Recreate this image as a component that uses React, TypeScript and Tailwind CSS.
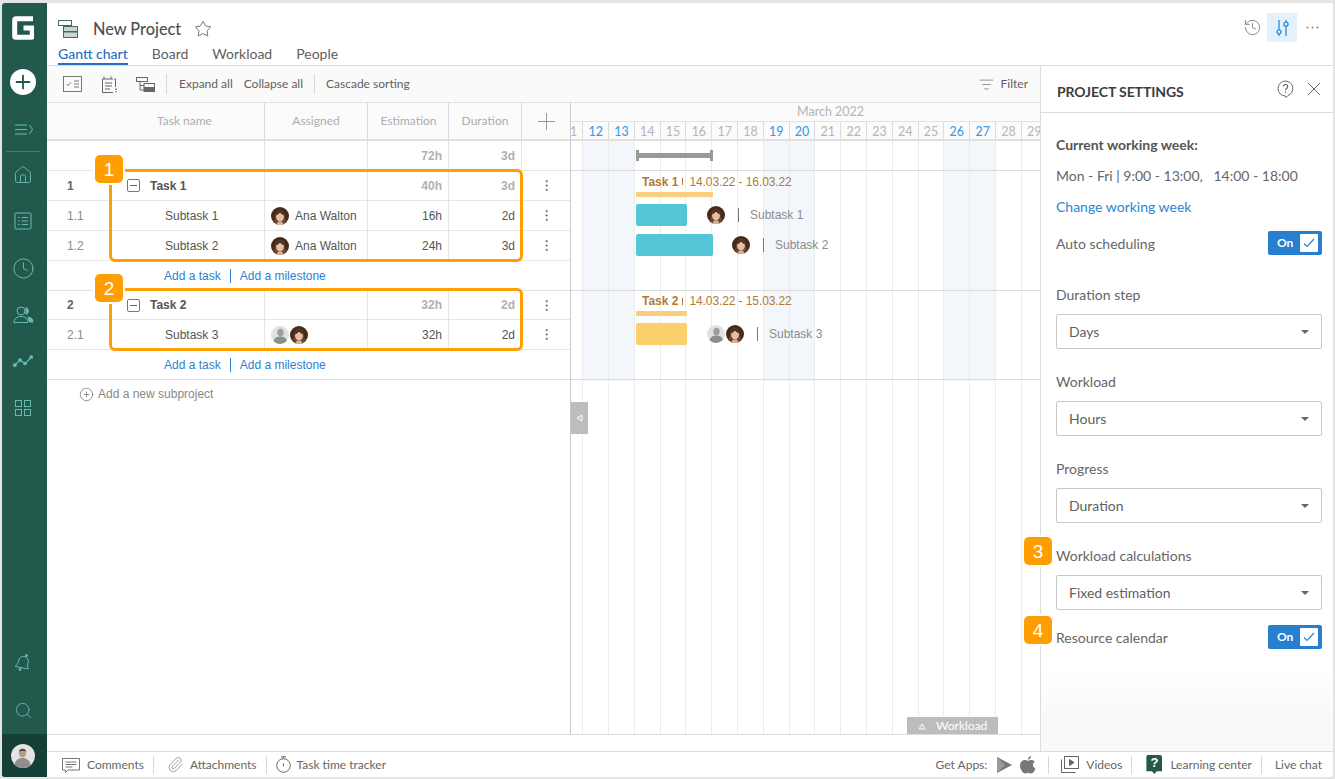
import { ReactNode } from "react";
import {
  CirclePlus,
  Clock,
  EllipsisVertical,
  History,
  House,
  ListFilter,
  Paperclip,
  Plus,
  Search,
  Star,
} from "lucide-react";

const arial = "font-['Liberation_Sans',Arial,sans-serif]";
const days = [11, 12, 13, 14, 15, 16, 17, 18, 19, 20, 21, 22, 23, 24, 25, 26, 27, 28, 29];
const weekend = [12, 13, 19, 20, 26, 27];

function Avatar({ gray, size = 18 }: { gray?: boolean; size?: number }) {
  if (gray) {
    return (
      <svg width={size} height={size} viewBox="0 0 18 18" className="shrink-0">
        <defs>
          <clipPath id="gray-clip">
            <circle cx="9" cy="9" r="9" />
          </clipPath>
        </defs>
        <g clipPath="url(#gray-clip)">
          <rect width="18" height="18" fill="#dfe2e2" />
          <ellipse cx="9.500" cy="6.500" rx="3.200" ry="3.800" fill="#a39c92" />
          <path d="M2 18c0-5 3-7.500 7.500-7.500s7 2.500 7 7.500z" fill="#8b908e" />
        </g>
      </svg>
    );
  }
  return (
    <svg width={size} height={size} viewBox="0 0 18 18" className="shrink-0">
      <circle cx="9" cy="9" r="9" fill="#45291b" />
      <path d="M2.500 14c1-1 1.500-3 1.800-5C4.800 5 6.500 3.200 9 3.200S13.200 5 13.700 9c.3 2 .8 4 1.800 5-1 2-3.500 3.500-6.500 3.500S3.500 16 2.500 14z" fill="#6b4632" />
      <ellipse cx="9" cy="9.500" rx="3.900" ry="5" fill="#e6bfa3" />
      <path d="M5 8.500C5.500 5.500 7 4.200 9 4c2 .2 3.500 1.500 4 4.500-1.500-.8-3-1.800-4-3-1 1.200-2.500 2.200-4 3z" fill="#3f2519" />
      <path d="M7 14.500h4l2 3.500H5z" fill="#d9ae92" />
    </svg>
  );
}

function UserAvatar() {
  return (
    <svg width="24" height="24" viewBox="0 0 24 24">
      <defs>
        <clipPath id="user-clip">
          <circle cx="12" cy="12" r="12" />
        </clipPath>
      </defs>
      <g clipPath="url(#user-clip)">
        <rect width="24" height="24" fill="#e4e4e2" />
        <ellipse cx="11.500" cy="9" rx="3.600" ry="4.400" fill="#b89c88" />
        <path d="M7.800 7.500C8.500 4 15 4 15.300 7.500 13 6.500 10 6.500 7.800 7.500z" fill="#4b4038" />
        <path d="M3 24c0-7 4-10 8.500-10S20 17 20 24z" fill="#8f908c" />
      </g>
    </svg>
  );
}

function SideIcon({ children, className }: { children: ReactNode; className?: string }) {
  return <div className={`flex h-[20px] w-[42px] items-center justify-center text-[#66bdae] ${className ?? ""}`}>{children}</div>;
}

function Sidebar() {
  return (
    <div className="flex w-[45px] shrink-0 flex-col bg-[#23594c]">
      <div className="ml-[10px] mt-[13px] h-[24px]">
        <svg width="22" height="24" viewBox="0 0 22 24" className="block">
          <path d="M21 2.700H3.700a1 1 0 0 0-1 1v16.600a1 1 0 0 0 1 1h15.600a1 1 0 0 0 1-1V12H11.500" fill="none" stroke="#fff" strokeWidth="5" />
        </svg>
      </div>
      <div className="ml-[8px] mt-[29px] flex h-[26px] w-[26px] items-center justify-center rounded-full bg-white">
        <Plus size={22} strokeWidth={2} className="text-[#23594c]" />
      </div>
      <SideIcon className="mt-[24px]">
        <svg width="19" height="11" viewBox="0 0 19 11" fill="none" stroke="currentColor" strokeWidth="1">
          <path d="M1 1h12M1 5.500h12M1 10h12M15.500 1 18.500 5.500 15.500 10" />
        </svg>
      </SideIcon>
      <div className="ml-[4px] mt-[12px] h-px w-[34px] bg-[#3f7e70]" />
      <SideIcon className="mt-[13px]">
        <House size={20} strokeWidth={1.100} />
      </SideIcon>
      <SideIcon className="mt-[26px]">
        <svg width="18" height="18" viewBox="0 0 18 18" fill="none" stroke="currentColor" strokeWidth="1">
          <rect x="1" y="1" width="16" height="16" rx="1" />
          <path d="M4 5.500h1.500M7.500 5.500H14M4 9h1.500M7.500 9H14M4 12.500h1.500M7.500 12.500H14" />
        </svg>
      </SideIcon>
      <SideIcon className="mt-[27px]">
        <Clock size={23} strokeWidth={1} />
      </SideIcon>
      <SideIcon className="mt-[27px]">
        <svg width="21" height="18" viewBox="0 0 21 18" fill="none" stroke="currentColor" strokeWidth="1">
          <circle cx="8" cy="5" r="4" />
          <path d="M1 16.500c0-4 3-6 7-6s7 2 7 6z" />
          <path d="M13 1.500a3.800 3.800 0 0 1 0 7z" fill="currentColor" />
          <path d="M15 11c3 .4 5 2 5 5h-3.500z" fill="currentColor" />
        </svg>
      </SideIcon>
      <SideIcon className="mt-[26px]">
        <svg width="20" height="12" viewBox="0 0 20 12" fill="none" stroke="currentColor" strokeWidth="1.100">
          <path d="M1.500 10.500 7 5l5 3.500 6.500-6.500" />
          <circle cx="1.800" cy="10.200" r="1.300" fill="currentColor" />
          <circle cx="7" cy="5" r="1.300" fill="currentColor" />
          <circle cx="12" cy="8.500" r="1.300" fill="currentColor" />
          <circle cx="18.200" cy="2.200" r="1.300" fill="currentColor" />
        </svg>
      </SideIcon>
      <SideIcon className="mt-[27px]">
        <svg width="16" height="16" viewBox="0 0 16 16" fill="none" stroke="currentColor" strokeWidth="1">
          <rect x=".5" y=".5" width="6" height="6" />
          <rect x="9.500" y=".5" width="6" height="6" />
          <rect x=".5" y="9.500" width="6" height="6" />
          <rect x="9.500" y="9.500" width="6" height="6" />
        </svg>
      </SideIcon>
      <SideIcon className="mt-auto">
        <svg width="18" height="18" viewBox="0 0 18 18" fill="none" stroke="currentColor" strokeWidth="1">
          <path d="M1 12.500c2-1 3-3 3.500-5.500C5.200 3.500 8.500 1.500 11 2.500c2.800 1 4 3.800 3 7-.7 2-.5 4 .5 5.500z" />
          <circle cx="12.500" cy="1.500" r="1" fill="currentColor" />
          <circle cx="6" cy="15.500" r="1" fill="currentColor" />
        </svg>
      </SideIcon>
      <SideIcon className="mb-[14px] mt-[27px]">
        <Search size={19} strokeWidth={1.100} />
      </SideIcon>
      <div className="flex h-[43px] items-center bg-[#163f37] pl-[9px]">
        <UserAvatar />
      </div>
    </div>
  );
}

function Header() {
  return (
    <div className="h-[63px] shrink-0 border-b border-[#dcdcdc] bg-white">
      <div className="flex h-[39px] items-center pl-[11px] pt-[13px]">
        <svg width="20" height="18" viewBox="0 0 20 18" fill="none" stroke="#47685f" strokeWidth="1">
          <rect x=".5" y=".5" width="13" height="5" fill="#fff" />
          <rect x="5.500" y="6.500" width="14" height="5" fill="#c9d6d2" />
          <rect x="5.500" y="12" width="14" height="5.500" fill="#c9d6d2" />
        </svg>
        <span className="ml-[15px] text-[16.300px] font-medium text-[#505050]">New Project</span>
        <Star size={18} strokeWidth={1.100} className="ml-[13px] text-[#555]" />
        <div className="ml-auto mt-[-3px] flex items-center pr-[14px]">
          <History size={19} strokeWidth={1.100} className="text-[#777]" />
          <div className="ml-[5px] flex h-[29px] w-[30px] items-center justify-center bg-[#e3f1fd]">
            <svg width="13" height="16" viewBox="0 0 13 16" fill="none" stroke="#2b88d8" strokeWidth="1.300">
              <path d="M3 0v9.500M3 14v2M10 0v2M10 6.500V16" />
              <circle cx="3" cy="11.800" r="2" />
              <circle cx="10" cy="4.200" r="2" />
            </svg>
          </div>
          <svg width="13" height="3" viewBox="0 0 13 3" fill="#888" className="ml-[9px]">
            <circle cx="1.500" cy="1.500" r="1" />
            <circle cx="6.500" cy="1.500" r="1" />
            <circle cx="11.500" cy="1.500" r="1" />
          </svg>
        </div>
      </div>
      <div className="flex h-[23px] gap-[24px] pl-[11px] text-[14px] leading-[23px] text-[#5f5f5f]">
        <span className="h-[23px] border-b-2 border-[#1f6fc5] font-medium text-[#1f6fc5]">Gantt chart</span>
        <span>Board</span>
        <span>Workload</span>
        <span>People</span>
      </div>
    </div>
  );
}

function Toolbar() {
  return (
    <div className="flex h-[37px] shrink-0 items-center border-b border-[#e2e2e2] bg-[#fafafa] pl-[16px] pr-[12px] text-[12px] text-[#5f5f5f]">
      <svg width="19" height="16" viewBox="0 0 19 16" fill="none" stroke="#777" strokeWidth="1">
        <rect x=".5" y=".5" width="18" height="15" />
        <path d="M3.500 8l1.500 1.500L8 6.500M11 5h5M11 8h5M11 11h5" />
      </svg>
      <svg width="17" height="17" viewBox="0 0 17 17" fill="none" stroke="#666" strokeWidth="1" className="ml-[19px]">
        <path d="M12 3h-10.500v13.500H12M3 3V.5M10 3V.5M13 3h1.500v8M4 7h7M4 10h7M4 13h5" />
        <path d="M15 12.500V14M15 15.200v1" strokeWidth="1.500" />
      </svg>
      <svg width="19" height="15" viewBox="0 0 19 15" fill="none" stroke="#666" strokeWidth="1" className="ml-[18px]">
        <rect x=".5" y=".5" width="11" height="4" />
        <path d="M4 4.500V13h4M4 8.500h4" />
        <rect x="8" y="6.500" width="10.500" height="4" />
        <rect x="8" y="11" width="10.500" height="3.500" fill="#666" />
      </svg>
      <div className="ml-[11px] h-[20px] w-px bg-[#d8d8d8]" />
      <span className="ml-[12px]">Expand all</span>
      <span className="ml-[11px]">Collapse all</span>
      <div className="ml-[11px] h-[20px] w-px bg-[#d8d8d8]" />
      <span className="ml-[11px]">Cascade sorting</span>
      <div className="ml-auto flex items-center gap-[7px]">
        <ListFilter size={15} strokeWidth={1.100} className="text-[#666]" />
        <span>Filter</span>
      </div>
    </div>
  );
}

function HeadCell({ label, className }: { label: string; className: string }) {
  return <div className={`flex items-center justify-center border-r border-[#d9d9d9] text-[12px] text-[#adadad] ${className}`}>{label}</div>;
}

function TaskRow({ no, name, assigned, est, dur, parent, h = "h-[30px]" }: { no?: string; name?: string; assigned?: ReactNode; est: string; dur: string; parent?: boolean; h?: string }) {
  return (
    <div className={`flex ${h} items-stretch border-b border-[#e6e6e6] text-[12px] ${arial}`}>
      <div className={`flex w-[218px] items-center border-r border-[#e6e6e6] pl-[20px] ${parent ? "font-bold text-[#666]" : "text-[#8c8c8c]"}`}>
        {no && <span className="w-[60px] shrink-0">{no}</span>}
        {parent && (
          <span className="mr-[10px] flex h-[13px] w-[13px] items-center justify-center rounded-[2px] border border-[#777]">
            <span className="h-px w-[7px] bg-[#666]" />
          </span>
        )}
        {name && <span className={parent ? "text-[#555]" : "ml-[38px] text-[#555]"}>{name}</span>}
      </div>
      <div className="flex w-[103px] items-center border-r border-[#e6e6e6] pl-[6px] text-[#555]">{assigned}</div>
      <div className={`flex w-[81px] items-center justify-end border-r border-[#e6e6e6] pr-[6px] ${parent || !name ? "font-bold text-[#b0b0b0]" : "text-[#555]"}`}>{est}</div>
      <div className={`flex w-[73px] items-center justify-end border-r border-[#e6e6e6] pr-[6px] ${parent || !name ? "font-bold text-[#b0b0b0]" : "text-[#555]"}`}>{dur}</div>
      <div className="flex flex-1 items-center justify-center text-[#666]">{no && <EllipsisVertical size={15} strokeWidth={1.500} />}</div>
    </div>
  );
}

function AddRow({ h = "h-[30px]" }: { h?: string }) {
  return (
    <div className={`flex ${h} items-center border-b border-[#e2e2e2] pl-[117px] text-[12px] text-[#2f7fd0] ${arial}`}>
      <span>Add a task</span>
      <span className="mx-[9px] h-[14px] w-px bg-[#2f7fd0]" />
      <span>Add a milestone</span>
    </div>
  );
}

function Badge({ n, className }: { n: number; className: string }) {
  return (
    <div className={`absolute z-20 flex h-[28px] w-[28px] items-center justify-center rounded-[5px] bg-[#ff9e00] text-[19px] font-medium leading-none text-white shadow-[0_0_0_2px_#fff] ${arial} ${className}`}>
      {n}
    </div>
  );
}

function Ana() {
  return (
    <>
      <Avatar />
      <span className="ml-[6px]">Ana Walton</span>
    </>
  );
}

function TaskTable() {
  return (
    <div className="relative flex w-[524px] shrink-0 flex-col border-r border-[#c9c9c9]">
      <div className="flex h-[38px] shrink-0 border-b-2 border-[#e0e0e0] bg-[#fbfbfb]">
        <HeadCell label="Task name" className="w-[218px] pl-[58px]" />
        <HeadCell label="Assigned" className="w-[103px]" />
        <HeadCell label="Estimation" className="w-[81px] pl-px" />
        <HeadCell label="Duration" className="w-[73px]" />
        <div className="flex flex-1 items-center justify-center">
          <svg width="17" height="17" viewBox="0 0 17 17" stroke="#999" strokeWidth="1">
            <path d="M8.500 0v17M0 8.500h17" />
          </svg>
        </div>
      </div>
      <TaskRow est="72h" dur="3d" />
      <TaskRow no="1" name="Task 1" est="40h" dur="3d" parent />
      <TaskRow no="1.1" name="Subtask 1" assigned={<Ana />} est="16h" dur="2d" />
      <TaskRow no="1.2" name="Subtask 2" assigned={<Ana />} est="24h" dur="3d" />
      <AddRow />
      <TaskRow no="2" name="Task 2" est="32h" dur="2d" parent h="h-[29px]" />
      <TaskRow
        no="2.1"
        name="Subtask 3"
        assigned={
          <>
            <Avatar gray />
            <span className="ml-px">
              <Avatar />
            </span>
          </>
        }
        est="32h"
        dur="2d"
      />
      <AddRow />
      <div className={`flex items-center gap-[4px] pl-[32px] pt-[5px] text-[12px] text-[#888] ${arial}`}>
        <CirclePlus size={15} strokeWidth={1.100} className="text-[#666]" />
        <span>Add a new subproject</span>
      </div>
      <div className="pointer-events-none absolute left-[62px] top-[66px] h-[93px] w-[414px] rounded-[6px] border-[3px] border-[#ff9e00]" />
      <div className="pointer-events-none absolute left-[62px] top-[185px] h-[63px] w-[414px] rounded-[6px] border-[3px] border-[#ff9e00]" />
      <Badge n={1} className="left-[48px] top-[52px]" />
      <Badge n={2} className="left-[48px] top-[171px]" />
    </div>
  );
}

function GanttTask({ label, dates, barW, labelH }: { label: string; dates: string; barW: string; labelH: string }) {
  return (
    <>
      <div className={`ml-[71px] flex items-center whitespace-nowrap text-[12px] text-[#b07b35] ${labelH} ${arial}`}>
        <span className="font-bold">{label}</span>
        <span className="ml-[4px] mr-[6px] h-[7px] w-px bg-[#b07b35]" />
        <span className="tracking-[-0.100px]">{dates}</span>
      </div>
      <div className={`ml-[65px] h-[5px] bg-[#fbcd7d] ${barW}`} />
    </>
  );
}

function SubBar({ label, barW, color, children, mt, gap }: { label: string; barW: string; color: string; children: ReactNode; mt: string; gap: string }) {
  return (
    <div className={`ml-[65px] flex h-[22px] items-center text-[12px] text-[#8c8c8c] ${mt} ${arial}`}>
      <div className={`h-full rounded-[2px] ${barW} ${color}`} />
      <div className={`flex items-center ${gap}`}>{children}</div>
      <div className="ml-[13px] mr-[11px] h-[14px] w-px bg-[#777]" />
      <span>{label}</span>
    </div>
  );
}

function Gantt() {
  return (
    <div className="relative min-w-0 flex-1 overflow-hidden">
      <div className="absolute inset-x-0 bottom-0 top-[38px] ml-[-13.500px] flex">
        {days.map((d) => (
          <div key={d} className="h-full w-[25.800px] shrink-0 border-r border-[#ececec]">
            {weekend.includes(d) && <div className="h-[240px] bg-[#f3f7fc]" />}
          </div>
        ))}
      </div>
      <div className="relative flex h-[38px] flex-col border-b-2 border-[#e0e0e0] bg-[#fbfbfb]">
        <div className="flex h-[19px] items-center border-b border-[#e2e2e2] pl-[226px] pt-px text-[12.500px] text-[#b5b5b5]">March 2022</div>
        <div className="ml-[-13.500px] flex h-[17px]">
          {days.map((d) => (
            <div
              key={d}
              className={`flex w-[25.800px] shrink-0 items-center justify-center border-r border-[#dcdcdc] pt-[3px] text-[12.500px] leading-none ${weekend.includes(d) ? "font-medium text-[#3f9be8]" : "text-[#b5b5b5]"}`}
            >
              {d}
            </div>
          ))}
        </div>
      </div>
      <div className="relative h-[30px] border-b border-[#dcdcdc] pt-[9px]">
        <div className="ml-[65px] flex h-[11px] w-[77px] items-center justify-between border-x-[3px] border-[#999]">
          <div className="h-[5px] w-full bg-[#999]" />
        </div>
      </div>
      <div className="relative h-[120px] border-b border-[#dcdcdc]">
        <GanttTask label="Task 1" dates="14.03.22 - 16.03.22" barW="w-[77px]" labelH="h-[21px]" />
        <SubBar label="Subtask 1" barW="w-[51px]" color="bg-[#53c7d7]" mt="mt-[7px]" gap="ml-[20px]">
          <Avatar />
        </SubBar>
        <SubBar label="Subtask 2" barW="w-[77px]" color="bg-[#53c7d7]" mt="mt-[8px]" gap="ml-[19px]">
          <Avatar />
        </SubBar>
      </div>
      <div className="relative h-[89px] border-b border-[#dcdcdc]">
        <GanttTask label="Task 2" dates="14.03.22 - 15.03.22" barW="w-[51px]" labelH="h-[20px]" />
        <SubBar label="Subtask 3" barW="w-[51px]" color="bg-[#fbce6e]" mt="mt-[7px]" gap="ml-[20px]">
          <Avatar gray />
          <span className="ml-px">
            <Avatar />
          </span>
        </SubBar>
      </div>
      <div className="absolute left-0 top-[299px] flex h-[32px] w-[17px] items-center justify-center bg-[#bdbdbd]">
        <svg width="7" height="8" viewBox="0 0 7 8" fill="none" stroke="#fff" strokeWidth="1">
          <path d="M6 1v6L1 4z" />
        </svg>
      </div>
      <div className="absolute bottom-0 left-[336px] flex h-[17px] w-[91px] items-center gap-[10px] bg-[#bdbdbd] pl-[11px] pt-px text-[12px] text-white">
        <svg width="8" height="7" viewBox="0 0 8 7" fill="none" stroke="#fff" strokeWidth="1">
          <path d="M1 6h6L4 1z" />
        </svg>
        <span>Workload</span>
      </div>
    </div>
  );
}

function Toggle() {
  return (
    <div className="flex h-[24px] w-[54px] items-center justify-between rounded-[2px] bg-[#2680cf] pl-[9px] pr-[4px] text-[12px] font-bold text-white">
      <span>On</span>
      <div className="flex h-[18px] w-[18px] items-center justify-center rounded-[1px] bg-white">
        <svg width="12" height="10" viewBox="0 0 12 10" fill="none" stroke="#2680cf" strokeWidth="1.100">
          <path d="M1 5.500 4 8.500 11 1" />
        </svg>
      </div>
    </div>
  );
}

function SelectBox({ value }: { value: string }) {
  return (
    <div className="mt-[9px] flex h-[35px] items-center justify-between rounded-[2px] border border-[#c8c8c8] bg-white pl-[12px] pr-[12px] text-[#5f5f5f]">
      <span>{value}</span>
      <svg width="8" height="4" viewBox="0 0 8 4">
        <path d="M0 0h8L4 4z" fill="#666" />
      </svg>
    </div>
  );
}

function Settings() {
  return (
    <div className="flex w-[293px] shrink-0 flex-col border-l border-[#dcdcdc] bg-[linear-gradient(to_bottom,#fff_88%,#f9f9f9_95%)] text-[14px] text-[#666]">
      <div className="flex h-[47px] shrink-0 items-center border-b border-[#dcdcdc] pl-[16px] pr-[12px] pt-[4px]">
        <span className="text-[14px] font-bold tracking-[-0.100px] text-[#3d3d3d]">PROJECT SETTINGS</span>
        <svg width="17" height="18" viewBox="0 0 17 18" fill="none" stroke="#666" strokeWidth="1" className="ml-auto mt-[-5px]">
          <path d="M8.500 1a7.500 7.500 0 1 0 0 15l.5 1.500L11 15.500A7.500 7.500 0 0 0 8.500 1z" />
          <path d="M6.300 6.500a2.200 2.200 0 1 1 3.300 2c-.8.5-1.100.9-1.100 1.800M8.500 11.500v1.200" strokeWidth="1.200" />
        </svg>
        <svg width="14" height="14" viewBox="0 0 14 14" stroke="#666" strokeWidth="1" className="ml-[13px] mt-[-5px]">
          <path d="M1 1l12 12M13 1 1 13" />
        </svg>
      </div>
      <div className="flex flex-col pl-[15px] pr-[11px]">
        <div className="mt-[22px] h-[20px] font-bold leading-[20px] text-[#555]">Current working week:</div>
        <div className="mt-[11px] h-[20px] whitespace-pre leading-[20px]">{"Mon - Fri | 9:00 - 13:00,   14:00 - 18:00"}</div>
        <div className="mt-[11px] h-[20px] leading-[20px] text-[#2a85d0]">Change working week</div>
        <div className="mt-[14px] flex items-center justify-between">
          <span>Auto scheduling</span>
          <Toggle />
        </div>
        <div className="mt-[30px] h-[20px] leading-[20px]">Duration step</div>
        <SelectBox value="Days" />
        <div className="mt-[23px] h-[20px] leading-[20px]">Workload</div>
        <SelectBox value="Hours" />
        <div className="mt-[23px] h-[20px] leading-[20px]">Progress</div>
        <SelectBox value="Duration" />
        <div className="relative mt-[23px] h-[20px] leading-[20px]">
          Workload calculations
          <Badge n={3} className="left-[-32px] top-[-9px]" />
        </div>
        <SelectBox value="Fixed estimation" />
        <div className="relative mt-[15px] flex items-center justify-between">
          <span>Resource calendar</span>
          <Toggle />
          <Badge n={4} className="left-[-32px] top-[-9px]" />
        </div>
      </div>
    </div>
  );
}

function FootSep({ className }: { className: string }) {
  return <div className={`h-[18px] w-px bg-[#d8d8d8] ${className}`} />;
}

function Footer() {
  return (
    <div className="flex h-[26px] shrink-0 items-center border-t border-[#dcdcdc] bg-white pl-[15px] pr-[11px] text-[12px] text-[#666]">
      <svg width="18" height="18" viewBox="0 0 18 18" fill="none" stroke="#777" strokeWidth="1">
        <path d="M.5 2.500h17v11.500H6l-2.500 2.500V14h-3z" />
        <path d="M3.500 6h11M3.500 8.500h11M3.500 11h7" />
      </svg>
      <span className="ml-[7px]">Comments</span>
      <FootSep className="ml-[9px]" />
      <Paperclip size={17} strokeWidth={1} className="ml-[13px] text-[#777]" />
      <span className="ml-[6px]">Attachments</span>
      <FootSep className="ml-[9px]" />
      <svg width="15" height="17" viewBox="0 0 15 17" fill="none" stroke="#666" strokeWidth="1" className="ml-[9px]">
        <circle cx="7.500" cy="9.500" r="6.800" />
        <path d="M5 .8h5M7.500 1v1.500M7.500 7.500v3" />
      </svg>
      <span className="ml-[6px]">Task time tracker</span>
      <span className="ml-auto">Get Apps:</span>
      <svg width="15" height="16" viewBox="0 0 15 16" className="ml-[10px]">
        <path d="M0 0l15 8-15 8z" fill="#777" />
        <path d="M0 0l8 8-8 8z" fill="#999" />
      </svg>
      <svg width="16" height="18" viewBox="0 0 16 18" className="ml-[8px]">
        <path d="M11 0c.2 1.800-1.200 3.600-3 3.700C7.800 2 9.300.2 11 0zM8 4.800c.9 0 1.900-.8 3.400-.8 1.300 0 2.600.6 3.400 1.800-2.800 1.700-2.300 5.500.7 6.700-.8 2-2.400 5-4.100 5-1.100 0-1.800-.8-3.100-.8s-2 .8-3.200.8C2.800 17.500 0 13 0 9.600 0 6 2.400 4.100 4.600 4.100 6 4.100 7 4.800 8 4.800z" fill="#777" />
      </svg>
      <FootSep className="ml-[12px]" />
      <svg width="18" height="17" viewBox="0 0 18 17" fill="none" stroke="#666" strokeWidth="1" className="ml-[12px]">
        <rect x="3.500" y=".5" width="14" height="12" fill="#fff" />
        <path d="M.5 3.500v13h14" />
        <path d="M8.500 3.500v6l4.500-3z" fill="#666" />
      </svg>
      <span className="ml-[7px]">Videos</span>
      <FootSep className="ml-[9px]" />
      <div className={`ml-[14px] flex h-[19px] w-[16px] items-start justify-center rounded-[2px] bg-[#23594c] text-[13px] font-bold leading-[16px] text-white [clip-path:polygon(0_0,100%_0,100%_85%,65%_85%,50%_100%,35%_85%,0_85%)] ${arial}`}>?</div>
      <span className="ml-[8px]">Learning center</span>
      <FootSep className="ml-[9px]" />
      <span className="ml-[13px]">Live chat</span>
    </div>
  );
}

export default function App() {
  return (
    <div className="h-[779px] w-[1335px] overflow-hidden bg-[#e4e4e4] pb-[2px] pl-[2px] pr-[2px] pt-[3px] font-['Lato',sans-serif]">
      <div className="flex h-full overflow-hidden rounded-[3px] bg-white">
        <Sidebar />
        <div className="flex min-w-0 flex-1 flex-col">
          <Header />
          <div className="flex min-h-0 flex-1">
            <div className="flex min-w-0 flex-1 flex-col">
              <Toolbar />
              <div className="flex min-h-0 flex-1 flex-col">
                <div className="flex min-h-0 flex-1 border-b border-[#dcdcdc]">
                  <TaskTable />
                  <Gantt />
                </div>
                <div className="h-[16px] shrink-0" />
              </div>
            </div>
            <Settings />
          </div>
          <Footer />
        </div>
      </div>
    </div>
  );
}
